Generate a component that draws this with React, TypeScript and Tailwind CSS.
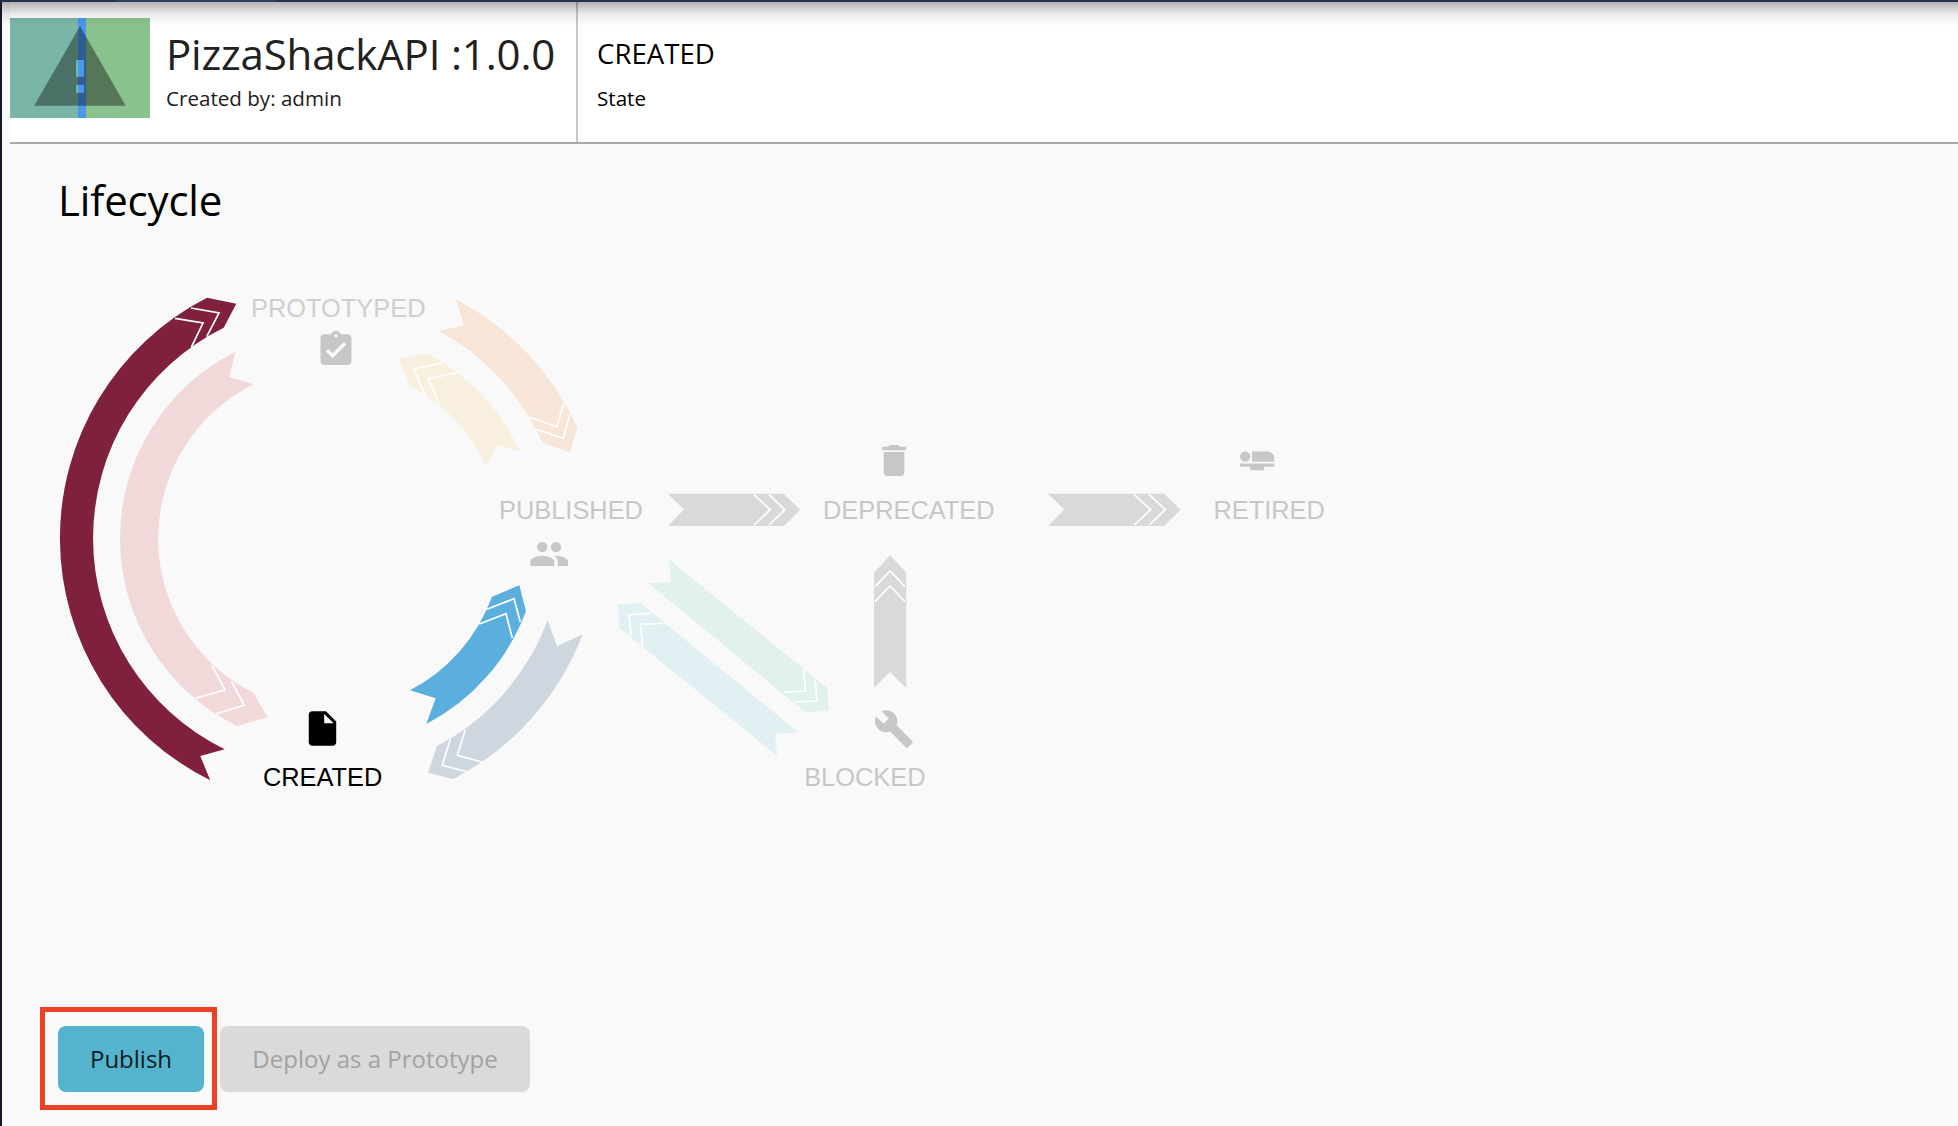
import React from "react";

type Arrow = { name: string; fill: string; shape: string; chevrons: string };

const arrows: Arrow[] = [
  {
    name: "created-prototyped",
    fill: "#7f203d",
    shape:
      "M207 297.8 L236.3 303.7 L223.7 327.7 A235 235 0 0 0 224.7 749.3 L200.3 756 L210.2 780.2 A270 270 0 0 1 207 297.8Z",
    chevrons: "M191 308 L219 313 L206.7 336.7 M175 318.3 L203 323 L191.3 347.3",
  },
  {
    name: "prototyped-created",
    fill: "#f1d9da",
    shape:
      "M235.7 351.7 L229 377 L253.3 384.3 A172.5 172.5 0 0 0 253.3 692.7 L267.6 717.2 L237 725.9 A208.6 208.6 0 0 1 235.7 351.7Z",
    chevrons: "M212 665.3 L225 690 L195.3 698.3 M231.3 681 L244.3 705.3 L216 713.7",
  },
  {
    name: "prototyped-published",
    fill: "#f7e6d8",
    shape:
      "M455.7 299.3 L464 325.3 L439 331 A235 235 0 0 1 542.3 442.7 L570 452.3 L577.3 427.7 A271 271 0 0 0 455.7 299.3Z",
    chevrons: "M563.7 403.3 L556.7 426.7 L528.7 417 M570 414.3 L563 438.3 L535 428.7",
  },
  {
    name: "published-prototyped",
    fill: "#f8efde",
    shape:
      "M427.3 353 L398.7 359.3 L410 386 A173 173 0 0 1 485.7 465.3 L497.3 445 L519.7 451.3 A210 210 0 0 0 427.3 353Z",
    chevrons: "M442.7 363 L413.7 369 L424.7 394.3 M458 372.3 L428.3 378.7 L439.3 405",
  },
  {
    name: "created-published",
    fill: "#5aafdf",
    shape:
      "M519.3 585.3 L526 611 A210 210 0 0 1 426.3 724 L435.7 698.3 L410 690.3 A173 173 0 0 0 492 596.7Z",
    chevrons: "M487 609.3 L514 598.7 L520.3 622 M479.3 624 L506 613.7 L512.3 638",
  },
  {
    name: "published-created",
    fill: "#ced6e0",
    shape:
      "M547.7 620.3 L557 646.3 L582.7 634.3 A271 271 0 0 1 453 779 L428 772.7 L437 746 A234 234 0 0 0 547.7 620.3Z",
    chevrons: "M450.3 739.3 L442.3 765.3 L467.3 771.7 M465.3 729.7 L457.3 755.3 L482 762",
  },
  {
    name: "published-blocked",
    fill: "#e1f2ea",
    shape: "M669 559.5 L671 582 L648.3 583.3 L805 712 L828.7 711 L827 687.7Z",
    chevrons: "M803.7 669 L805.3 691 L783.7 692.3 M815 679 L817 701 L795 702",
  },
  {
    name: "blocked-published",
    fill: "#e0f0f3",
    shape: "M640.7 603.3 L617.7 604.3 L619.7 628.3 L777.3 756 L775 734 L798 732Z",
    chevrons: "M651 613.3 L629 614.7 L631.3 636 M662.3 623.3 L640.3 624.3 L642.7 646",
  },
  {
    name: "published-deprecated",
    fill: "#d9d9d9",
    shape: "M667.7 493.7 L684 509.5 L667.7 526 H783.7 L800.3 509.7 L783.7 493.7Z",
    chevrons: "M754 494.7 L770.3 509.7 L754 525 M769 494.7 L785 509.7 L769 525",
  },
  {
    name: "deprecated-retired",
    fill: "#d9d9d9",
    shape: "M1048 493.7 L1064.3 509.5 L1048 526 H1164 L1180.7 509.7 L1164 493.7Z",
    chevrons: "M1134.3 494.7 L1150.6 509.7 L1134.3 525 M1149.3 494.7 L1165.3 509.7 L1149.3 525",
  },
  {
    name: "blocked-deprecated",
    fill: "#d9d9d9",
    shape: "M890 555.3 L906.3 572.7 V688 L890 672 L874 688 V572.7Z",
    chevrons: "M875 586.7 L890 571 L905 586.7 M875 601.7 L890 586 L905 601.7",
  },
];

const states = [
  { label: "PROTOTYPED", x: 251, y: 316.7, fill: "#cfcfcf" },
  { label: "PUBLISHED", x: 499, y: 518.8, fill: "#c7c7c7" },
  { label: "DEPRECATED", x: 823, y: 518.8, fill: "#c7c7c7" },
  { label: "RETIRED", x: 1213.4, y: 518.8, fill: "#c7c7c7" },
  { label: "CREATED", x: 262.9, y: 785.8, fill: "#000000" },
  { label: "BLOCKED", x: 804.2, y: 785.8, fill: "#c7c7c7" },
];

const icons = [
  {
    name: "assignment",
    x: 315.4,
    y: 329,
    fill: "#c7c7c7",
    d: "M19 3h-4.18C14.4 1.84 13.3 1 12 1c-1.3 0-2.4.84-2.82 2H5c-1.1 0-2 .9-2 2v14c0 1.1.9 2 2 2h14c1.1 0 2-.9 2-2V5c0-1.1-.9-2-2-2zm-7 0c.55 0 1 .45 1 1s-.45 1-1 1-1-.45-1-1 .45-1 1-1zm-2 14l-4-4 1.41-1.41L10 14.17l6.59-6.59L18 9l-8 8z",
  },
  {
    name: "file",
    x: 301.9,
    y: 707.9,
    fill: "#000000",
    d: "M6 2c-1.1 0-1.99.9-1.99 2L4 20c0 1.1.89 2 1.99 2H18c1.1 0 2-.9 2-2V8l-6-6H6zm7 7V3.5L18.5 9H13z",
  },
  {
    name: "people",
    x: 528.6,
    y: 533.4,
    fill: "#c7c7c7",
    d: "M16 11c1.66 0 2.99-1.34 2.99-3S17.66 5 16 5c-1.66 0-3 1.34-3 3s1.34 3 3 3zm-8 0c1.66 0 2.99-1.34 2.99-3S9.66 5 8 5C6.34 5 5 6.34 5 8s1.34 3 3 3zm0 2c-2.33 0-7 1.17-7 3.5V19h14v-2.5c0-2.33-4.67-3.5-7-3.5zm8 0c-.29 0-.62.02-.97.05 1.16.84 1.97 1.97 1.97 3.45V19h6v-2.5c0-2.33-4.67-3.5-7-3.5z",
  },
  {
    name: "delete",
    x: 873.4,
    y: 439.9,
    fill: "#c7c7c7",
    d: "M6 19c0 1.1.9 2 2 2h8c1.1 0 2-.9 2-2V7H6v12zM19 4h-3.5l-1-1h-5l-1 1H5v2h14V4z",
  },
  {
    name: "build",
    x: 873.3,
    y: 708.3,
    fill: "#c7c7c7",
    d: "M22.7 19l-9.1-9.1c.9-2.3.4-5-1.5-6.9-2-2-5-2.4-7.4-1.3L9 6 6 9 1.6 4.7C.4 7.1.9 10.1 2.9 12.1c1.9 1.9 4.6 2.4 6.9 1.5l9.1 9.1c.4.4 1 .4 1.4 0l2.3-2.3c.5-.4.5-1.1.1-1.4z",
  },
  {
    name: "seat",
    x: 1236.6,
    y: 439.4,
    fill: "#c7c7c7",
    d: "M22 11v2H9V7h9c2.21 0 4 1.79 4 4zM2 14v2h6v2h8v-2h6v-2H2zm5.14-1.9c1.16-1.19 1.14-3.08-.04-4.24-1.19-1.16-3.08-1.14-4.24.04-1.16 1.19-1.14 3.08.04 4.24 1.19 1.16 3.08 1.14 4.24-.04z",
  },
];

function ApiThumbnail() {
  return (
    <svg className="mt-4 block h-[100px] w-[140px] shrink-0" viewBox="0 0 140 100">
      <rect width="70" height="100" fill="#7ab6a7" />
      <rect x="70" width="70" height="100" fill="#89c18f" />
      <rect x="68" width="8" height="100" fill="#4a98ee" />
      <path
        fillRule="evenodd"
        fill="#000"
        fillOpacity="0.38"
        d="M70 8 L115.7 87.7 H24.2Z M66 42 V59 H74 V42Z M66 67 V75 H74 V67Z"
      />
    </svg>
  );
}

function LifecycleDiagram() {
  return (
    <svg className="block h-[560px] w-[1300px]" viewBox="50 250 1300 560">
      {arrows.map((a) => (
        <g key={a.name}>
          <path d={a.shape} fill={a.fill} />
          <path d={a.chevrons} fill="none" stroke="#fff" strokeWidth="1.7" />
        </g>
      ))}
      {icons.map((i) => (
        <g key={i.name} transform={`translate(${i.x} ${i.y}) scale(1.715)`}>
          <path d={i.d} fill={i.fill} />
        </g>
      ))}
      {states.map((s) => (
        <text
          key={s.label}
          x={s.x}
          y={s.y}
          fill={s.fill}
          className="font-['Liberation_Sans',sans-serif] text-[25.4px]"
        >
          {s.label}
        </text>
      ))}
    </svg>
  );
}

export default function App() {
  return (
    <div className="flex h-[1126px] w-[1958px] flex-col overflow-hidden bg-[#f9f9f9] font-['Open_Sans',sans-serif] text-black">
      <div className="flex h-[2px] shrink-0 bg-[#22324d]">
        <div className="ml-[116px] w-[160px] bg-[#2d4163]" />
      </div>
      <div className="relative flex flex-1 flex-col border-l-2 border-[#15182b]">
        <div className="pointer-events-none absolute inset-x-0 top-0 h-6 bg-linear-to-b from-black/30 via-black/8 to-transparent" />
        <header className="ml-2 flex h-[142px] shrink-0 border-b-2 border-[#a9a9a9] bg-white">
          <ApiThumbnail />
          <div className="ml-4 w-[412px] border-r-2 border-[#c8c8c8] pt-[24px] text-[#212121]">
            <h1 className="whitespace-nowrap text-[42px] leading-[56px] tracking-[-0.17px]">
              PizzaShackAPI :1.0.0
            </h1>
            <p className="mt-px text-[20.6px] leading-[31px]">Created by: admin</p>
          </div>
          <div className="ml-[19px] pt-[31px]">
            <div className="text-[27.6px] leading-[40px]">CREATED</div>
            <div className="mt-[10px] text-[20.6px] leading-[31px]">State</div>
          </div>
        </header>
        <main className="flex flex-col">
          <h2 className="mt-[28px] ml-14 text-[42px] leading-[56px] tracking-[-0.17px]">Lifecycle</h2>
          <div className="mt-[22px] ml-12">
            <LifecycleDiagram />
          </div>
          <div className="mt-[197px] ml-[38px] flex h-[103px] items-start">
            <div className="border-[5px] border-[#ee4025] pt-[14px] pr-2 pb-[13px] pl-[13px]">
              <button className="h-[66px] w-[146px] rounded-lg bg-[#54b4cd] text-[24px] text-[#0d1a1f]">
                Publish
              </button>
            </div>
            <button className="mt-[19px] ml-[3px] h-[66px] w-[310px] rounded-lg bg-[#dadada] text-[24px] text-[#a2a2a2]">
              Deploy as a Prototype
            </button>
          </div>
        </main>
      </div>
    </div>
  );
}
